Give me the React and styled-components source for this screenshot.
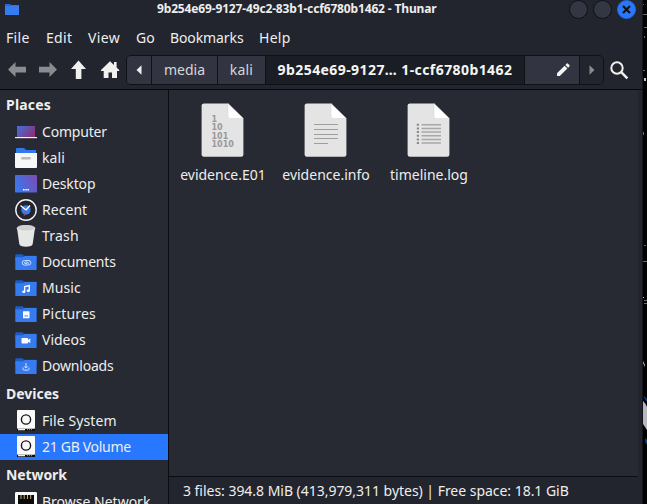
import React from 'react';
import styled, { createGlobalStyle } from 'styled-components';

const GlobalStyle = createGlobalStyle`
  * { box-sizing: border-box; }
  body { margin: 0; background: #020203; overflow: hidden; font: 14px "Noto Sans", sans-serif; color: #eeeeec; }
  svg { display: block; flex: none; }
`;

const Screen = styled.div`
  display: flex;
  width: 647px;
  height: 504px;
  overflow: hidden;
`;

const Window = styled.div`
  display: flex;
  flex-direction: column;
  width: 643px;
  height: 504px;
  background: #23252e;
  border-right: 1px solid #14151b;
`;

const TitleBar = styled.header`
  display: grid;
  grid-template-columns: 157px 1fr 73px;
  height: 18px;
  flex: none;
  align-items: center;
`;

const AppIcon = styled.div`
  padding-left: 5px;
`;

const Title = styled.div`
  font-size: 12px;
  font-weight: 700;
  line-height: 16px;
  padding-bottom: 2px;
  letter-spacing: -0.15px;
  white-space: nowrap;
`;

const WindowButtons = styled.div`
  display: flex;
  gap: 5px;
`;

const WindowButton = styled.div`
  display: flex;
  align-items: center;
  justify-content: center;
  width: 19px;
  height: 19px;
  flex: none;
  border-radius: 50%;
  border: 1px solid ${p => (p.$close ? '#2069e8' : '#101116')};
  background: ${p => (p.$close ? '#2777ff' : '#333643')};
`;

const MenuBar = styled.nav`
  display: flex;
  height: 34px;
  flex: none;
  padding: 2px 0 0 6px;
`;

const MenuItem = styled.span`
  width: ${p => p.$w}px;
  line-height: 35px;
  letter-spacing: ${p => p.$track}px;
`;

const Toolbar = styled.div`
  display: flex;
  align-items: center;
  height: 37px;
  flex: none;
  padding: 0 0 1px 7px;
`;

const NavButtons = styled.div`
  display: flex;
  width: 119px;
  gap: 11px;
`;

const PathBar = styled.div`
  display: flex;
  width: 478px;
  height: 30px;
  border: 1px solid #101116;
  border-radius: 5px;
  overflow: hidden;
  margin-right: 6px;
`;

const Crumb = styled.div`
  display: flex;
  align-items: center;
  justify-content: ${p => (p.$end ? 'flex-end' : 'center')};
  width: ${p => p.$w}px;
  padding-right: ${p => (p.$end ? 9 : 0)}px;
  flex: none;
  white-space: nowrap;
  line-height: 28px;
  font-weight: ${p => (p.$current ? 700 : 400)};
  letter-spacing: ${p => p.$track || 0}px;
  color: ${p => (p.$current ? '#f5f5f3' : '#d6d7d9')};
  background: ${p => (p.$current ? '#1b1d24' : p.$flat ? '#23252e' : '#323541')};
  border-right: ${p => (p.$flat ? 'none' : '1px solid #101116')};
`;

const Main = styled.div`
  display: grid;
  grid-template-columns: 169px 469px;
  flex: 1;
  min-height: 0;
  border-top: 1px solid #08090c;
`;

const Sidebar = styled.aside`
  background: #272933;
  border-right: 1px solid #0c0d11;
  padding-top: 1px;
  overflow: hidden;
`;

const Heading = styled.div`
  height: ${p => p.$h}px;
  line-height: ${p => p.$h}px;
  padding-left: 6px;
  font-weight: 700;
  letter-spacing: ${p => p.$track}px;
`;

const Place = styled.div`
  display: flex;
  align-items: center;
  gap: 5px;
  height: 26px;
  padding-left: 15px;
  line-height: 26px;
  white-space: nowrap;
  letter-spacing: ${p => p.$track}px;
  background: ${p => (p.$selected ? '#2777ff' : 'transparent')};
`;

const Content = styled.main`
  display: flex;
  flex-direction: column;
  min-width: 0;
`;

const Files = styled.div`
  display: flex;
  align-items: flex-start;
  flex: 1;
  background: #272933;
  padding: 13px 0 0 2px;
`;

const File = styled.div`
  display: flex;
  flex-direction: column;
  align-items: center;
  width: 103px;
  gap: 8px;
  line-height: 20px;
`;

const FileName = styled.span`
  padding-left: 1px;
`;

const StatusBar = styled.footer`
  height: 28px;
  border-top: 1px solid #0c0d11;
  padding-left: 14px;
  line-height: 27px;
  letter-spacing: -0.03px;
  white-space: nowrap;
`;

const Folder = ({ children }) => (
  <svg width="22" height="22" viewBox="0 0 22 22">
    <path d="M0.3 4.2q0-1 1-1h6l1.8 1.6H21q.6 0 .6.7V10H.3z" fill="#1b5cc6" />
    <path d="M0.3 6.3h7.8l1.6-1.3h11.9v13.2q0 .9-.9.9H1.2q-.9 0-.9-.9z" fill="#367bf0" />
    {children}
  </svg>
);

const placeIcons = {
  computer: (
    <svg width="22" height="22" viewBox="0 0 22 22">
      <defs>
        <linearGradient id="screen" x1="0" y1="0" x2="1" y2=".5">
          <stop stopColor="#3e72dc" /><stop offset="1" stopColor="#88347f" />
        </linearGradient>
      </defs>
      <path d="M2 5h18v11H2z" fill="url(#screen)" />
      <path d="M0 16h22v1.2H0z" fill="#f1f1f1" />
    </svg>
  ),
  home: (
    <svg width="22" height="22" viewBox="0 0 22 22">
      <path d="M1 2q0-1 1-1h7l2 2h10v5H1z" fill="#2f78f0" />
      <path d="M0 6h22v14q0 1-1 1H1q-1 0-1-1z" fill="#f7f7f7" />
      <rect x="6" y="10" width="10" height="2.4" rx="1.2" fill="#bcbcbc" />
    </svg>
  ),
  desktop: (
    <svg width="22" height="22" viewBox="0 0 22 22">
      <defs>
        <linearGradient id="desk" x1="0" y1=".6" x2="1" y2=".2">
          <stop stopColor="#3977ee" /><stop offset="1" stopColor="#7a4db5" />
        </linearGradient>
      </defs>
      <rect y="2" width="22" height="17.5" rx=".8" fill="url(#desk)" />
      <path d="M8 16h1.6v1.5H8zm2.3 0h1.5v1.5h-1.5zm2.2 0H14v1.5h-1.5z" fill="#fff" />
    </svg>
  ),
  recent: (
    <svg width="22" height="22" viewBox="0 0 22 22">
      <circle cx="11" cy="11" r="10.2" fill="#23252e" stroke="#f2f2f2" strokeWidth="1.4" />
      <circle cx="11" cy="11" r="4.7" fill="#367bf0" />
      <path d="M5.5 6.5L11 11l4-4.5" fill="none" stroke="#fff" strokeWidth="1.3" />
      <path d="M11 11l-2 6" stroke="#c0435d" strokeWidth=".8" />
    </svg>
  ),
  trash: (
    <svg width="22" height="22" viewBox="0 0 22 22">
      <path d="M2 3h18l-2.3 16q-.5 2.7-6.7 2.7T4.3 19z" fill="#e6e6e6" />
      <ellipse cx="11" cy="3.2" rx="9" ry="2.9" fill="#cfcfcf" stroke="#efefef" strokeWidth=".7" />
    </svg>
  ),
  documents: (
    <Folder>
      <path d="M14.8 9.5H9.5a2.3 2.3 0 0 0 0 4.6h3.2a2.2 2.2 0 0 0 0-3.1H9.9a1 1 0 0 0 0 1.6h2.5M14 9.8a2 2 0 0 1-.5 4.2" fill="none" stroke="#d5e4ff" strokeWidth=".9" />
    </Folder>
  ),
  music: (
    <Folder>
      <path d="M9.7 14.2V9.5l4.6-1v4.7" fill="none" stroke="#fff" strokeWidth="1.3" />
      <ellipse cx="8.8" cy="14.7" rx="1.6" ry="1.3" fill="#fff" />
      <ellipse cx="13.3" cy="13.8" rx="1.6" ry="1.3" fill="#fff" />
    </Folder>
  ),
  pictures: (
    <Folder>
      <rect x="8" y="8.3" width="6.5" height="7" rx=".5" fill="#fff" />
      <path d="M9 13.5l1.4-1.9 1 1 1-.8 1.2 1.7z" fill="#76a5f5" />
    </Folder>
  ),
  videos: (
    <Folder>
      <rect x="6.5" y="9" width="6.5" height="5.5" rx="1" fill="#fff" />
      <path d="M12.5 11l2.8-1.6v4.7l-2.8-1.6z" fill="#fff" />
    </Folder>
  ),
  downloads: (
    <Folder>
      <path d="M11 8v5M9.3 11.4l1.7 1.7 1.7-1.7M8 12.6v1.2q0 1.3 1.3 1.3h3.4q1.3 0 1.3-1.3v-1.2" fill="none" stroke="#d5e4ff" strokeWidth="1" />
    </Folder>
  ),
  drive: (
    <svg width="22" height="22" viewBox="0 0 22 22">
      <path d="M2 18h18v3H2z" fill="#0d0e12" />
      <path d="M3 19h7v1.3H3z" fill="#eee" />
      <path d="M12 19h1v1.3h-1zm2 0h1v1.3h-1zm2 0h1v1.3h-1z" fill="#888" />
      <rect x="2" y="0" width="18" height="18.7" rx=".8" fill="#fafafa" />
      <circle cx="11" cy="9.5" r="4.6" fill="none" stroke="#15161a" strokeWidth="1.4" />
    </svg>
  ),
  network: (
    <svg width="22" height="22" viewBox="0 0 22 22">
      <rect y="1" width="22" height="21" rx="1.3" fill="#fafafa" />
      <path d="M3 4h16v16H3z" fill="#0a0a0c" />
      <path d="M6 4v4M9.2 4v4M12.5 4v4M15.7 4v4" stroke="#c8b26a" strokeWidth="1" />
    </svg>
  ),
};

const Page = ({ children }) => (
  <svg width="43" height="54" viewBox="0 0 43 54">
    <path d="M3 .4H27L42.4 15.5V51.5q0 2.2-2.2 2.2H3Q.6 53.7.6 51.5V2.6Q.6.4 3 .4z" fill="#e4e4e4" />
    <path d="M27 .4L42.4 15.5H29.3q-2.3 0-2.3-2.3z" fill="#fff" stroke="#cdcdcd" strokeWidth=".4" />
    {children}
  </svg>
);

const files = [
  {
    name: 'evidence.E01',
    icon: (
      <Page>
        <g fill="#999" fontFamily="DejaVu Sans" fontWeight="700" fontSize="8">
          <text x="10.5" y="18.5">1</text>
          <text x="10.5" y="27">10</text>
          <text x="10.5" y="36">101</text>
          <text x="10.5" y="44.3">1010</text>
        </g>
      </Page>
    ),
  },
  {
    name: 'evidence.info',
    icon: (
      <Page>
        <path d="M10 21.5h24M10 26.5h24M10 31.5h24M10 35.5h24M10 40.5h14" stroke="#9e9e9e" strokeWidth="1" />
      </Page>
    ),
  },
  {
    name: 'timeline.log',
    icon: (
      <Page>
        <path d="M14.5 21.8h19.5M14.5 25.4h19.5M14.5 29.1h19.5M14.5 32.8h19.5M14.5 36.4h19.5M14.5 40h19.5" stroke="#a8a8a8" strokeWidth="1.5" />
        <path d="M9.8 21.8h2.2M9.8 25.4h2.2M9.8 29.1h2.2M9.8 32.8h2.2M9.8 36.4h2.2M9.8 40h2.2" stroke="#8a8a8a" strokeWidth="2" />
      </Page>
    ),
  },
];

const menus = [['File', 40, 0.35], ['Edit', 42, 0.3], ['View', 48, 0.4], ['Go', 34, 0], ['Bookmarks', 89, -0.1], ['Help', 40, 0.3]];

const places = [
  ['Computer', 'computer', -0.2], ['kali', 'home', 0.1], ['Desktop', 'desktop', -0.15],
  ['Recent', 'recent', 0.05], ['Trash', 'trash', 0.2], ['Documents', 'documents', -0.2],
  ['Music', 'music', 0.1], ['Pictures', 'pictures', 0.15], ['Videos', 'videos', 0],
  ['Downloads', 'downloads', -0.2],
];

const Arrow = ({ d, color = '#f0f0ee' }) => (
  <svg width="20" height="20" viewBox="0 0 20 20"><path d={d} fill={color} /></svg>
);

const DesktopStrip = () => (
  <svg width="4" height="504" viewBox="0 0 4 504">
    <path d="M0 4h1v1H0zM0 14h4v1H0zM1 27h3v1H1zM1 36h1v2H1zM0 70h2v1H0zM0 132h1v3H0zM1 245h2v1H1zM0 261h4v1H0zM1 300h3v1H1zM1 303h3v1H1z" fill="#686a6e" />
    <path d="M1 78h2v3H1zM0 297h1v1H0zM0 361l2 4v2l-2-4z" fill="#c4c5c8" />
    <path d="M0 401q3 3 4 6v23l-4-6z" fill="#b7b8bd" />
    <path d="M1 396l3 3v3l-3-4zM2 438l2 2v5l-2-3z" fill="#0c3c80" />
  </svg>
);

export default function App() {
  return (
    <>
      <GlobalStyle />
      <Screen>
        <Window>
          <TitleBar>
            <AppIcon>
              <svg width="14" height="11" viewBox="0 0 14 11">
                <path d="M0 0h5l1.3 1.3H14V11H0z" fill="#2369dc" />
                <path d="M0 2h5.5l1-.7H14V11H0z" fill="#367bf0" />
              </svg>
            </AppIcon>
            <Title>9b254e69-9127-49c2-83b1-ccf6780b1462 - Thunar</Title>
            <WindowButtons>
              <WindowButton />
              <WindowButton />
              <WindowButton $close>
                <svg width="9" height="9" viewBox="0 0 9 9"><path d="M1 1l7 7M8 1L1 8" stroke="#111319" strokeWidth="2.2" /></svg>
              </WindowButton>
            </WindowButtons>
          </TitleBar>
          <MenuBar>
            {menus.map(([label, w, track]) => <MenuItem key={label} $w={w} $track={track}>{label}</MenuItem>)}
          </MenuBar>
          <Toolbar>
            <NavButtons>
              <Arrow color="#8b8c8f" d="M1 9.5L8.5 2v4.8H19v5.6H8.5V17z" />
              <Arrow color="#8b8c8f" d="M19 9.5L11.5 2v4.8H1v5.6h10.5V17z" />
              <Arrow d="M9.5 .5L17 9h-4.6v10H6.8V9H2z" />
              <Arrow d="M10 1.2l4 3.9V2h2.6v5.5L19.2 10v1H17v7h-5v-5.5H8.5V18H3.7v-7H1v-1z" />
            </NavButtons>
            <PathBar>
              <Crumb $w={25}>
                <svg width="6" height="10" viewBox="0 0 6 10"><path d="M5.5 .3v9.4L.5 5z" fill="#f0f0ee" /></svg>
              </Crumb>
              <Crumb $w={66}>media</Crumb>
              <Crumb $w={48} $track={0.2}>kali</Crumb>
              <Crumb $w={259} $current $track={0.42}>9b254e69-9127… 1-ccf6780b1462</Crumb>
              <Crumb $w={55} $end>
                <svg width="14" height="14" viewBox="0 0 14 14">
                  <path d="M1 10.2L8.6 2.7l2.8 2.8L3.8 13H1zM9.4 1.9L10.8.6q.5-.5 1 0l1.7 1.7q.5.5 0 1l-1.3 1.4z" fill="#f5f5f3" />
                </svg>
              </Crumb>
              <Crumb $w={23} $flat>
                <svg width="6" height="10" viewBox="0 0 6 10"><path d="M.5 .3v9.4l5-4.7z" fill="#8b8c8f" /></svg>
              </Crumb>
            </PathBar>
            <svg width="19" height="19" viewBox="0 0 19 19">
              <circle cx="7" cy="7" r="5.7" fill="none" stroke="#f0f0ee" strokeWidth="2" />
              <path d="M11.2 11.2l6.2 6.2" stroke="#f0f0ee" strokeWidth="2.5" />
            </svg>
          </Toolbar>
          <Main>
            <Sidebar>
              <Heading $h={28} $track={0.2}>Places</Heading>
              {places.map(([label, icon, track]) => (
                <Place key={label} $track={track}>{placeIcons[icon]}{label}</Place>
              ))}
              <Heading $h={29} $track={0}>Devices</Heading>
              <Place $track={0.1}>{placeIcons.drive}File System</Place>
              <Place $track={-0.3} $selected>{placeIcons.drive}21 GB Volume</Place>
              <Heading $h={29} $track={-0.1}>Network</Heading>
              <Place $track={0}>{placeIcons.network}Browse Network</Place>
            </Sidebar>
            <Content>
              <Files>
                {files.map(f => <File key={f.name}>{f.icon}<FileName>{f.name}</FileName></File>)}
              </Files>
              <StatusBar>3 files: 394.8 MiB (413,979,311 bytes) | Free space: 18.1 GiB</StatusBar>
            </Content>
          </Main>
        </Window>
        <DesktopStrip />
      </Screen>
    </>
  );
}
